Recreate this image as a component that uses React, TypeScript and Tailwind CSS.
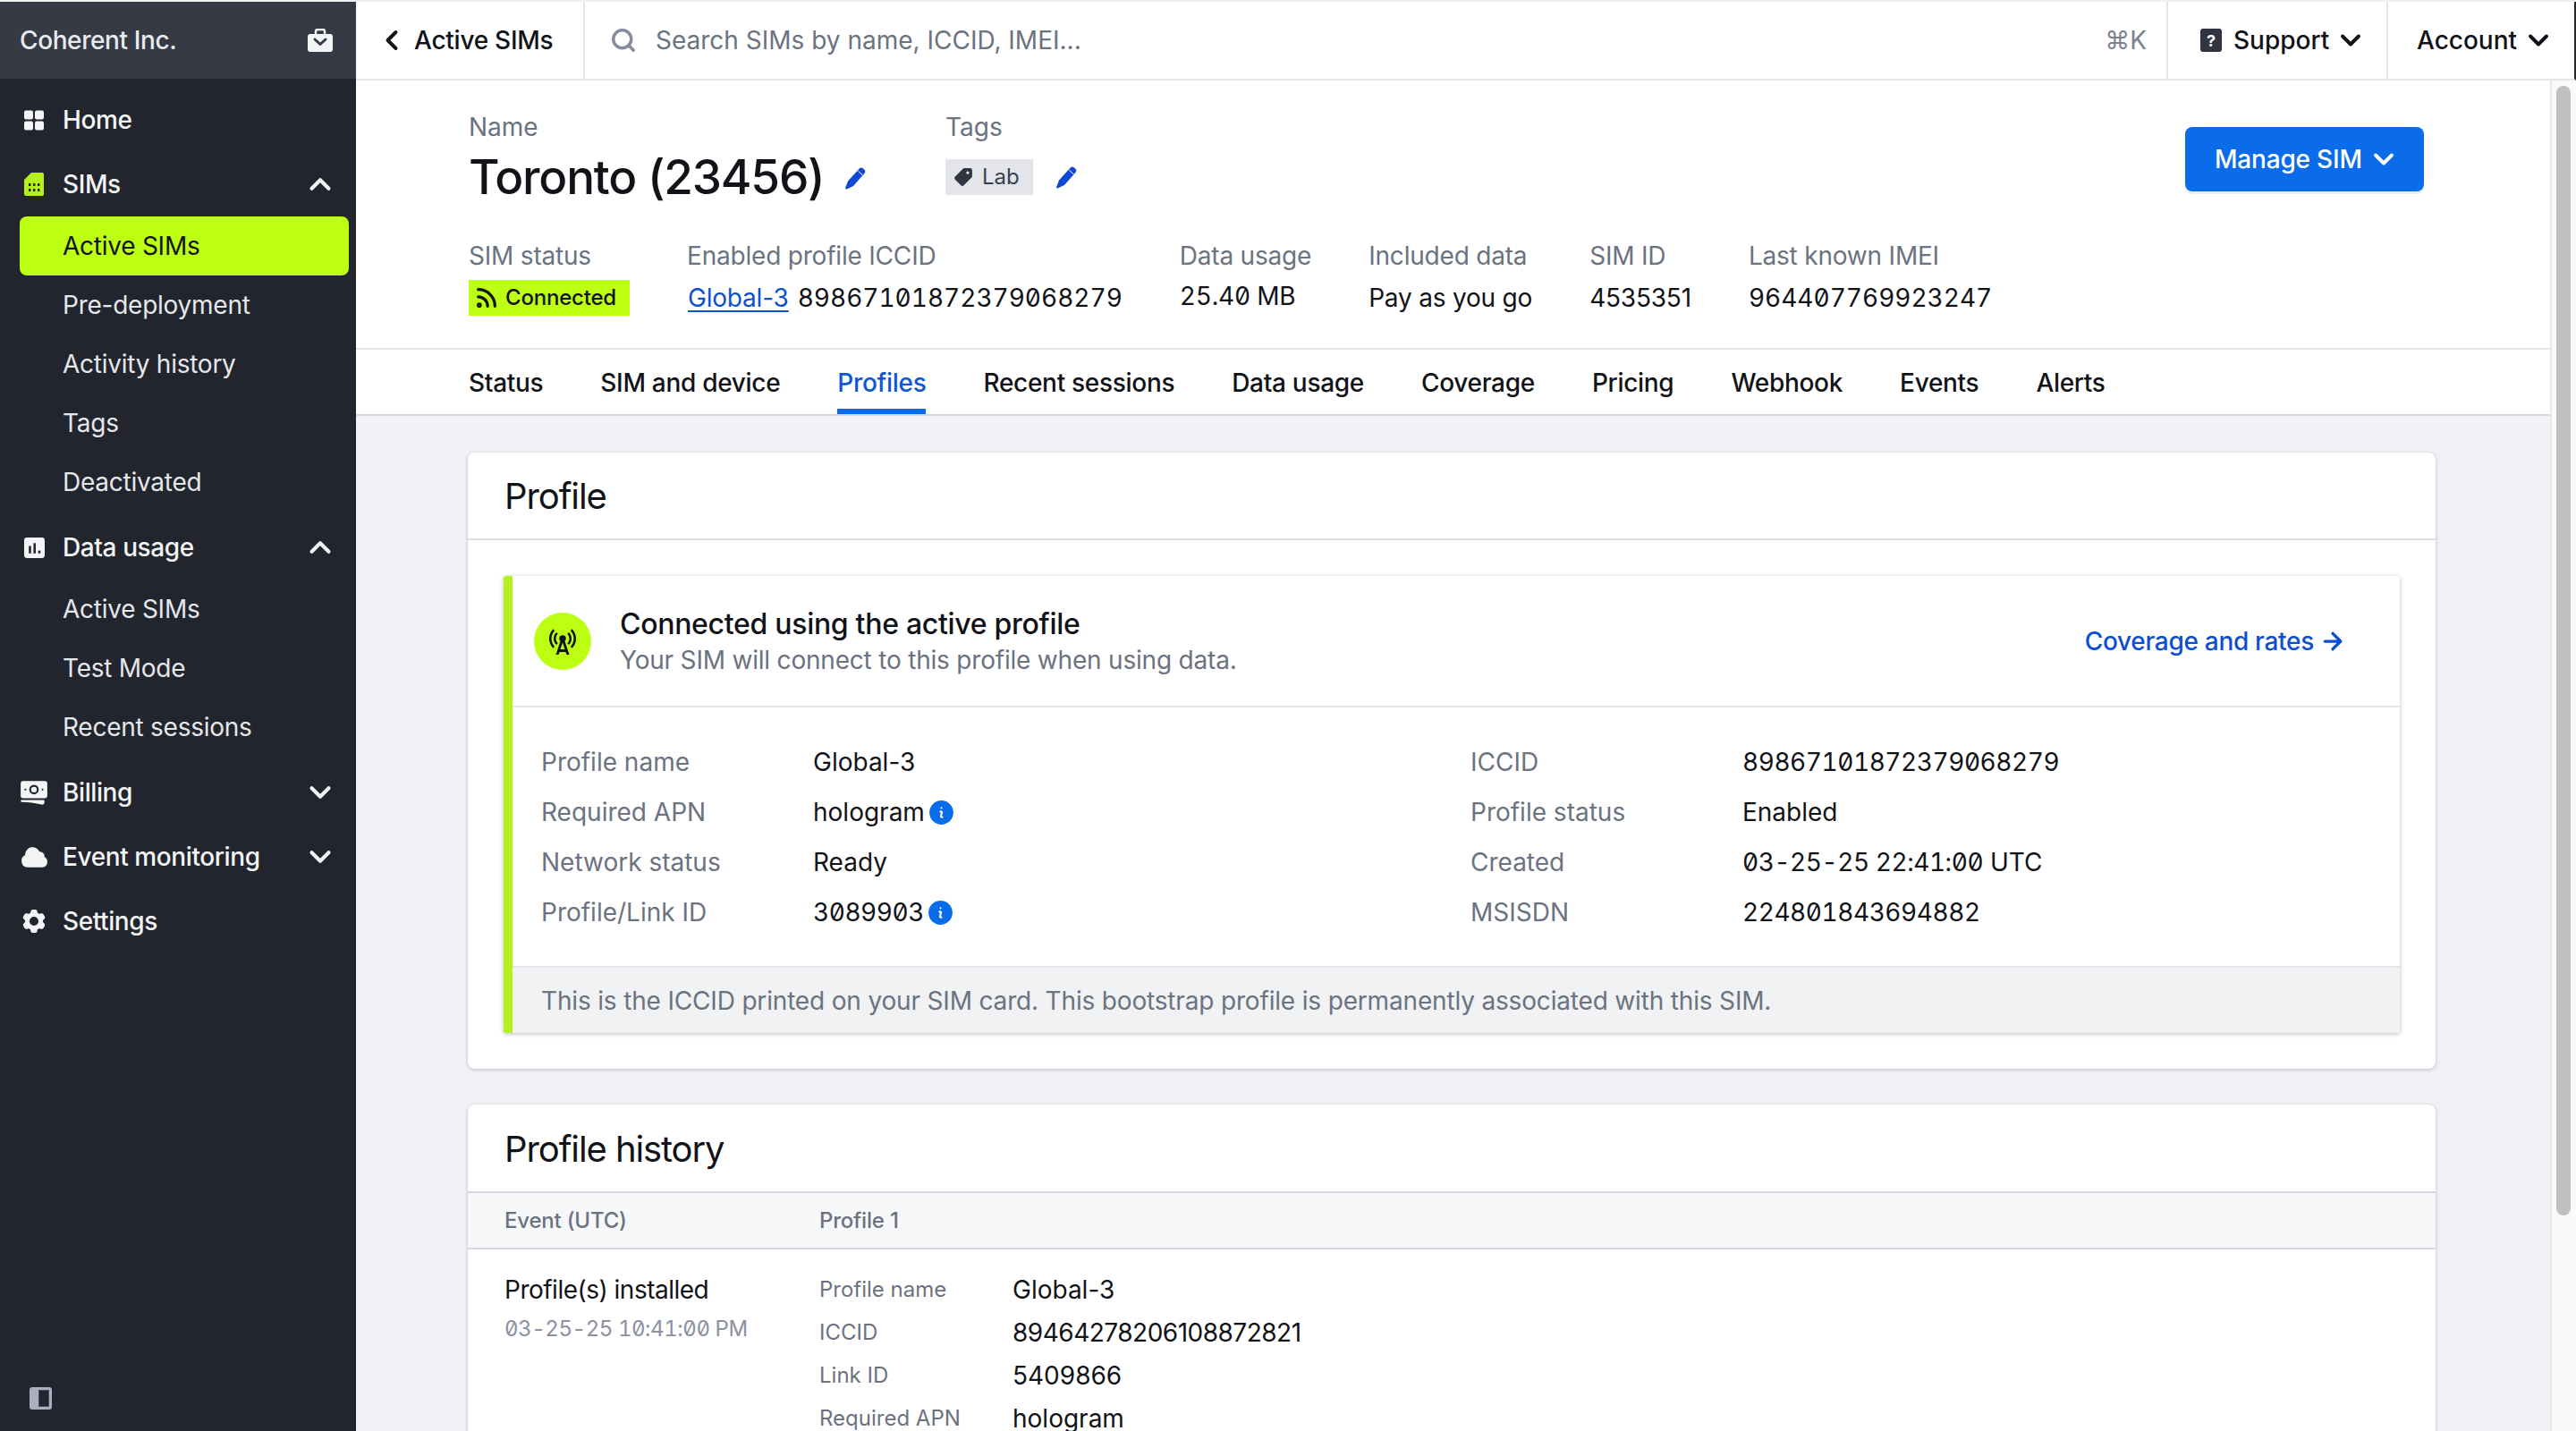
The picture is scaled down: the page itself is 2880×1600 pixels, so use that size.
import { ArrowRight, ChevronDown, ChevronLeft, ChevronUp, Rss, Search } from 'lucide-react';
import { HiBanknotes, HiCloud, HiCog6Tooth, HiInformationCircle } from 'react-icons/hi2';
import { MdCellTower } from 'react-icons/md';

const FONT = "font-['Inter','Noto_Sans',sans-serif]";
const NUM = 'tabular-nums slashed-zero';
const NUM_TIGHT = 'tabular-nums slashed-zero tracking-[-0.45px]';

function GridIcon() {
  return (
    <svg viewBox="0 0 22 22" className="h-[23px] w-[22px]" fill="currentColor">
      <rect x="0" y="0" width="10" height="10" rx="2" />
      <rect x="12" y="0" width="10" height="10" rx="2" />
      <rect x="0" y="12" width="10" height="10" rx="2" />
      <rect x="12" y="12" width="10" height="10" rx="2" />
    </svg>
  );
}

function SimIcon() {
  return (
    <svg viewBox="0 0 22 26" className="h-[26px] w-[22px]">
      <path d="M8 0h12a2 2 0 0 1 2 2v22a2 2 0 0 1-2 2H2a2 2 0 0 1-2-2V8z" fill="#b4f01c" />
      <g fill="#22252d">
        <rect x="5" y="12" width="2.4" height="3" />
        <rect x="10" y="12" width="2.4" height="3" />
        <rect x="15" y="12" width="2.4" height="3" />
        <rect x="5" y="18" width="2.4" height="3" />
        <rect x="10" y="18" width="2.4" height="3" />
        <rect x="15" y="18" width="2.4" height="3" />
      </g>
    </svg>
  );
}

function ChartIcon() {
  return (
    <svg viewBox="0 0 22 22" className="h-[23px] w-[23px]">
      <rect width="22" height="22" rx="3" fill="currentColor" />
      <g fill="#22252d">
        <rect x="5" y="9" width="2.4" height="8" />
        <rect x="10" y="6" width="2.4" height="11" />
        <rect x="15" y="14" width="2.4" height="3" />
      </g>
    </svg>
  );
}

function BriefcaseIcon() {
  return (
    <svg viewBox="0 0 28 26" className="h-[26px] w-[28px]">
      <path d="M9 6V3a2 2 0 0 1 2-2h6a2 2 0 0 1 2 2v3" fill="none" stroke="#f3f4f6" strokeWidth="2.4" />
      <rect y="6" width="28" height="20" rx="3" fill="#f3f4f6" />
      <path d="M8 12l6 5.5 6-5.5" fill="none" stroke="#363a45" strokeWidth="3" strokeLinecap="round" strokeLinejoin="round" />
    </svg>
  );
}

function PencilIcon() {
  return (
    <svg viewBox="0 0 26 26" className="h-[26px] w-[26px] shrink-0" fill="#1048d6">
      <path d="M5 16.5L17.5 2.8a3.2 3.2 0 0 1 4.6-.2l1 .9a3.2 3.2 0 0 1 .2 4.5L11 22l-7.5 3.4a1 1 0 0 1-1.4-1.2z" />
      <path d="M16.2 5l5.4 5" stroke="#ffffff" strokeWidth="1" />
    </svg>
  );
}

function TagIcon() {
  return (
    <svg viewBox="0 0 20 20" className="h-[22px] w-[22px] shrink-0" fill="#2f3541">
      <path fillRule="evenodd" d="M11 1h6a2 2 0 0 1 2 2v6a2 2 0 0 1-.6 1.4l-8 8a2 2 0 0 1-2.8 0l-6-6a2 2 0 0 1 0-2.8l8-8A2 2 0 0 1 11 1zm3.5 3a1.5 1.5 0 1 0 0 3 1.5 1.5 0 0 0 0-3z" />
    </svg>
  );
}

function NavGroup({ icon, label, open, children }: { icon: React.ReactNode; label: string; open?: boolean; children?: React.ReactNode }) {
  return (
    <div>
      <div className="flex h-[72px] items-center pr-[21px] text-[28px] font-medium tracking-[-0.4px] text-[#f3f4f6]">
        <span className="flex w-[70px] shrink-0 items-center justify-center pl-[6px]">{icon}</span>
        <span className="flex-1">{label}</span>
        {open === true && <ChevronUp size={38} strokeWidth={2.6} />}
        {open === false && <ChevronDown size={38} strokeWidth={2.6} />}
      </div>
      {children}
    </div>
  );
}

function SubItem({ label, active }: { label: string; active?: boolean }) {
  return (
    <div className={`ml-[22px] mr-2 flex h-[66px] items-center rounded-lg pl-[48px] text-[28px] tracking-[-0.25px] ${active ? 'bg-[#bdff12] text-[#111318]' : 'text-[#e5e7eb]'}`}>
      {label}
    </div>
  );
}

function Sidebar() {
  return (
    <aside className="flex h-full w-[398px] shrink-0 flex-col bg-[#22252d]">
      <div className="flex h-[86px] shrink-0 items-center justify-between bg-[#363a45] pl-[22px] pr-[26px] text-[28px] font-medium tracking-[-0.4px] text-[#e9eaee]">
        <span>Coherent Inc.</span>
        <BriefcaseIcon />
      </div>
      <nav className="flex-1 pt-[10px]">
        <NavGroup icon={<GridIcon />} label="Home" />
        <NavGroup icon={<SimIcon />} label="SIMs" open>
          <SubItem label="Active SIMs" active />
          <SubItem label="Pre-deployment" />
          <SubItem label="Activity history" />
          <SubItem label="Tags" />
          <SubItem label="Deactivated" />
        </NavGroup>
        <div className="h-1" />
        <NavGroup icon={<ChartIcon />} label="Data usage" open>
          <SubItem label="Active SIMs" />
          <SubItem label="Test Mode" />
          <SubItem label="Recent sessions" />
        </NavGroup>
        <div className="h-1" />
        <NavGroup icon={<HiBanknotes size={34} />} label="Billing" open={false} />
        <NavGroup icon={<HiCloud size={33} />} label="Event monitoring" open={false} />
        <NavGroup icon={<HiCog6Tooth size={32} />} label="Settings" />
      </nav>
      <div className="pb-[24px] pl-[33px]">
        <div className="flex h-[25px] w-[25px] items-center rounded-[3px] bg-[#a9afc1] pl-[10px]">
          <div className="h-[19px] w-[12px] border border-[#4a4e5c] bg-[#22252d]" />
        </div>
      </div>
    </aside>
  );
}

function TopBar() {
  return (
    <header className="flex h-[88px] shrink-0 items-stretch border-b-2 border-r-2 border-[#e4e5ea] border-r-[#22252d] bg-white">
      <div className="flex w-[256px] items-center gap-[7px] border-r-2 border-[#e4e5ea] pl-[22px] text-[28px] font-medium tracking-[-0.25px] text-[#111318]">
        <ChevronLeft size={36} strokeWidth={2.6} />
        <span>Active SIMs</span>
      </div>
      <div className="flex flex-1 items-center pl-[28px] pr-[22px] text-[28px] text-[#6b7280]">
        <Search size={30} strokeWidth={2.8} className="text-[#868c99]" />
        <span className="ml-[21px] flex-1">Search SIMs by name, ICCID, IMEI...</span>
        <span className="text-[#7c8190]">⌘K</span>
      </div>
      <div className="flex w-[246px] items-center border-l-2 border-[#e4e5ea] pl-[36px] text-[28px] font-medium text-[#111318]">
        <span className="flex h-[26px] w-[24px] items-center justify-center rounded-[3px] bg-[#2f3541] text-[18px] font-bold text-white">?</span>
        <span className="ml-[13px]">Support</span>
        <ChevronDown size={36} strokeWidth={2.6} className="ml-[6px]" />
      </div>
      <div className="flex max-w-[210px] flex-1 items-center border-l-2 border-[#e4e5ea] pl-[32px] text-[28px] font-medium text-[#111318]">
        <span>Account</span>
        <ChevronDown size={36} strokeWidth={2.6} className="ml-[6px]" />
      </div>
    </header>
  );
}

function Meta({ label, children }: { label: string; children: React.ReactNode }) {
  return (
    <div className="tracking-[-0.2px]">
      <div className="flex h-[40px] items-center text-[28px] text-[#6b7280]">{label}</div>
      <div className="mt-[7px] flex h-[40px] items-center text-[28px] text-[#111318]">{children}</div>
    </div>
  );
}

function SimHeader() {
  return (
    <section className="shrink-0 border-b-2 border-[#e4e5ea] bg-white pb-[36px] pl-[126px] pr-[141px] pt-[32px]">
      <div className="flex items-start justify-between">
        <div className="flex">
          <div className="w-[533px]">
            <div className="flex h-[40px] items-center text-[28px] text-[#6b7280]">Name</div>
            <div className="mt-[5px] flex h-[64px] items-center gap-[22px] text-[53px] font-medium tracking-[-1.2px] text-[#111318]">
              <span>Toronto (23456)</span>
              <PencilIcon />
            </div>
          </div>
          <div>
            <div className="flex h-[40px] items-center text-[28px] text-[#6b7280]">Tags</div>
            <div className="mt-[4px] flex h-[64px] items-center gap-[24px]">
              <span className="flex h-[40px] w-[98px] items-center gap-[10px] bg-[#e3e5ea] pl-[9px] text-[24px] text-[#374151]">
                <TagIcon />
                Lab
              </span>
              <PencilIcon />
            </div>
          </div>
        </div>
        <button type="button" className="mt-[20px] flex h-[72px] w-[267px] items-center gap-[6px] rounded-lg bg-[#0a6ce8] pl-[33px] text-[28px] font-medium tracking-[-0.2px] text-white shadow-[0_3px_0_#ecebf0]">
          Manage SIM
          <ChevronDown size={36} strokeWidth={2.6} />
        </button>
      </div>
      <div className="mt-[35px] flex gap-[64px]">
        <Meta label="SIM status">
          <span className="flex h-[40px] w-[180px] items-center gap-[7px] bg-[#bdff12] pl-[6px] text-[24px] font-medium text-[#111318]">
            <Rss size={28} strokeWidth={2.8} />
            Connected
          </span>
        </Meta>
        <Meta label="Enabled profile ICCID">
          <a className="ml-[1px] text-[#0e4fd0] underline underline-offset-4">Global-3</a>
          <span className={`ml-[10px] tracking-normal ${NUM}`}>89867101872379068279</span>
        </Meta>
        <Meta label="Data usage">
          <span className={`-mt-[4px] ${NUM}`}>25.40 MB</span>
        </Meta>
        <Meta label="Included data">Pay as you go</Meta>
        <Meta label="SIM ID">4535351</Meta>
        <Meta label="Last known IMEI">
          <span className={`tracking-normal ${NUM}`}>964407769923247</span>
        </Meta>
      </div>
    </section>
  );
}

const TABS = ['Status', 'SIM and device', 'Profiles', 'Recent sessions', 'Data usage', 'Coverage', 'Pricing', 'Webhook', 'Events', 'Alerts'];

function Tabs() {
  return (
    <nav className="flex h-[74px] shrink-0 items-stretch gap-[64px] border-b-2 border-[#d5d6df] bg-white pl-[126px] text-[28px] font-medium tracking-[-0.3px]">
      {TABS.map(tab => (
        <span
          key={tab}
          className={`flex items-center border-b-[6px] border-t-[8px] border-t-transparent ${tab === 'Profiles' ? 'border-b-[#0a6ce8] text-[#0e56d8]' : 'border-b-transparent text-[#111318]'}`}
        >
          {tab}
        </span>
      ))}
    </nav>
  );
}

function InfoDot() {
  return <HiInformationCircle size={33} className="ml-[2px] text-[#0a6ce8]" />;
}

function DetailRow({ label, children }: { label: string; children: React.ReactNode }) {
  return (
    <div className="flex h-[56px] items-center text-[28px]">
      <span className="w-[304px] shrink-0 text-[#6b7280]">{label}</span>
      <span className="flex items-center text-[#111318]">{children}</span>
    </div>
  );
}

function ProfileCard() {
  return (
    <div className="rounded-lg bg-white shadow-[0_1px_4px_rgba(60,64,80,0.3)]">
      <h2 className="flex h-[98px] items-center border-b-2 border-[#dcdde3] pl-[41px] pt-[2px] text-[40px] tracking-[-1.1px] text-[#111318]">Profile</h2>
      <div className="p-[40px]">
        <div className="overflow-hidden rounded-[3px] border-l-[10px] border-[#b4f01c] bg-white shadow-[0_1px_5px_rgba(60,64,80,0.35)]">
          <div className="flex h-[147px] items-center border-b-2 border-[#e4e5ea] pl-[24px] pr-[60px]">
            <div className="flex h-[64px] w-[64px] items-center justify-center rounded-full bg-[#bdff12] text-[#111318]">
              <MdCellTower size={36} />
            </div>
            <div className="ml-[32px] flex-1 pt-[3px]">
              <div className="text-[32px] font-medium leading-[40px] tracking-[-0.3px] text-[#111318]">Connected using the active profile</div>
              <div className="text-[28px] leading-[40px] tracking-[-0.2px] text-[#6b7280]">Your SIM will connect to this profile when using data.</div>
            </div>
            <a className="flex items-center gap-[6px] text-[28px] font-medium tracking-[-0.3px] text-[#0e4fd0]">
              Coverage and rates
              <ArrowRight size={30} strokeWidth={2.6} />
            </a>
          </div>
          <div className="grid grid-cols-2 gap-x-[33px] pb-[32px] pl-[32px] pr-[33px] pt-[33px]">
            <div>
              <DetailRow label="Profile name">Global-3</DetailRow>
              <DetailRow label="Required APN">hologram<InfoDot /></DetailRow>
              <DetailRow label="Network status">Ready</DetailRow>
              <DetailRow label="Profile/Link ID"><span className={NUM_TIGHT}>3089903</span><InfoDot /></DetailRow>
            </div>
            <div>
              <DetailRow label="ICCID"><span className={NUM_TIGHT}>89867101872379068279</span></DetailRow>
              <DetailRow label="Profile status">Enabled</DetailRow>
              <DetailRow label="Created"><span className={NUM_TIGHT}>03-25-25 22:41:00</span>&nbsp;UTC</DetailRow>
              <DetailRow label="MSISDN"><span className={NUM_TIGHT}>224801843694882</span></DetailRow>
            </div>
          </div>
          <div className="flex h-[75px] items-center border-t-2 border-[#e4e5ea] bg-[#f1f2f4] pl-[32px] text-[28px] tracking-[-0.17px] text-[#6b7280]">
            This is the ICCID printed on your SIM card. This bootstrap profile is permanently associated with this SIM.
          </div>
        </div>
      </div>
    </div>
  );
}

function HistoryRow({ label, value, tight }: { label: string; value: string; tight?: boolean }) {
  return (
    <div className="flex h-[48px] items-center">
      <span className="w-[216px] shrink-0 text-[24px] text-[#6b7280]">{label}</span>
      <span className={`text-[28px] text-[#111318] ${tight ? 'tracking-[-0.5px]' : ''}`}>{value}</span>
    </div>
  );
}

function HistoryCard() {
  return (
    <div className="mt-[40px] rounded-lg bg-white shadow-[0_1px_4px_rgba(60,64,80,0.3)]">
      <h2 className="flex h-[97px] items-center pl-[41px] pt-[2px] text-[40px] tracking-[-1.1px] text-[#111318]">Profile history</h2>
      <div className="flex h-[65px] items-center border-y-2 border-[#d5d6df] bg-[#f6f7f9] pl-[41px] text-[24px] font-medium tracking-[-0.2px] text-[#6b7280]">
        <span className="w-[352px]">Event (UTC)</span>
        <span>Profile 1</span>
      </div>
      <div className="flex pl-[41px] pt-[21px]">
        <div className="w-[352px]">
          <div className="flex h-[48px] items-center text-[28px] tracking-[-0.5px] text-[#111318]">Profile(s) installed</div>
          <div className={`flex h-[40px] items-center text-[24px] tracking-[-0.45px] text-[#8b91a0] ${NUM}`}>03-25-25 10:41:00 PM</div>
        </div>
        <div>
          <HistoryRow label="Profile name" value="Global-3" />
          <HistoryRow label="ICCID" value="89464278206108872821" tight />
          <HistoryRow label="Link ID" value="5409866" />
          <HistoryRow label="Required APN" value="hologram" />
        </div>
      </div>
    </div>
  );
}

function ScrollBar() {
  return (
    <div className="w-[29px] shrink-0 border-l-2 border-[#e8e8ea] bg-[#fafafa] pl-[5px] pt-[6px]">
      <div className="h-[1263px] w-[16px] rounded-full bg-[#c1c1c1]" />
    </div>
  );
}

export default function App() {
  return (
    <div className={`flex h-[1600px] w-[2880px] flex-col overflow-hidden border-t-2 border-[#f0f0f3] ${FONT}`}>
      <div className="flex min-h-0 flex-1">
        <Sidebar />
        <main className="flex min-w-0 flex-1 flex-col bg-[#f1f2f5]">
          <TopBar />
          <div className="flex min-h-0 flex-1">
            <div className="min-w-0 flex-1 overflow-hidden">
              <SimHeader />
              <Tabs />
              <div className="pl-[125px] pr-[128px] pt-[41px]">
                <ProfileCard />
                <HistoryCard />
              </div>
            </div>
            <ScrollBar />
          </div>
        </main>
      </div>
    </div>
  );
}
